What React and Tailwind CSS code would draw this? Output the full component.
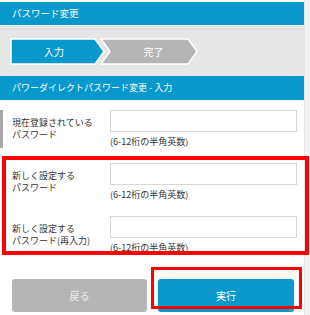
import React from 'react';

const font = { fontFamily: '"Noto Sans CJK JP", "Noto Sans", sans-serif' };

function Step({ label, active, first }) {
  // chevron drawn as svg, text on top
  const points = first
    ? '1,1 85,1 94,13.5 85,26 1,26'
    : '1,1 88,1 97,13.5 88,26 1,26 10,13.5';
  return (
    <div className={`relative h-[27px] ${first ? 'w-[96px]' : 'w-[99px] -ml-[6px]'}`}>
      <svg className="absolute inset-0" width={first ? 96 : 99} height="27" viewBox={`0 0 ${first ? 96 : 99} 27`}>
        <polygon points={points} fill={active ? '#0898cb' : '#b5b5b5'} stroke="#ffffff" strokeWidth="1.5" />
      </svg>
      <div className={`relative flex h-full items-center justify-center text-[10px] text-white ${first ? 'pr-[8px]' : 'pl-[8px] text-[#ececec]'}`}>
        {label}
      </div>
    </div>
  );
}

function Row({ label, bar }) {
  return (
    <div className={`flex h-[38px] ${bar ? 'border-l-[3px] border-[#a8a8a8] pl-[9px]' : 'pl-[12px]'}`}>
      <div className="w-[98px] pt-[7px] text-[9px] leading-[12px] text-[#333]">
        {label.map((l) => (
          <div key={l}>{l}</div>
        ))}
      </div>
      <div className="w-[187px]">
        <div className="h-[22px] border border-[#d6d6d6] bg-white"></div>
        <div className="mt-[4px] text-[9px] leading-[12px] text-[#333]">(6-12桁の半角英数)</div>
      </div>
    </div>
  );
}

export default function App() {
  return (
    <div className="relative h-[315px] w-[310px] overflow-hidden bg-[#f3f3f3]" style={font}>
      <div className="h-full w-[305px] border-r border-[#e2e2e2] bg-white pt-[2px]">
        {/* Page title */}
        <div className="flex h-[23px] items-center bg-[#0898cb] pl-[12px] text-[9.5px] text-white">
          パスワード変更
        </div>

        {/* Steps */}
        <div className="flex h-[51px] items-center border-t border-[#f4eeee] bg-[#e6e6e6] pl-[10px]">
          <Step label="入力" active first />
          <Step label="完了" />
        </div>

        {/* Section title */}
        <div className="flex h-[24px] items-center bg-[#0898cb] pl-[12px] text-[9px] text-white">
          パワーダイレクトパスワード変更 - 入力
        </div>

        {/* Form */}
        <div className="flex flex-col gap-[15px] pt-[10px]">
          <Row label={['現在登録されている', 'パスワード']} bar />
          <Row label={['新しく設定する', 'パスワード']} />
          <Row label={['新しく設定する', 'パスワード(再入力)']} />
        </div>

        {/* Buttons */}
        <div className="mt-[25px] flex gap-[11px] pl-[12px]">
          <button className="h-[33px] w-[135px] rounded-[3px] bg-[#b5b5b5] text-[10px] text-[#ececec]">戻る</button>
          <button className="h-[33px] w-[136px] rounded-[3px] bg-[#0898cb] text-[10px] text-white">実行</button>
        </div>
      </div>

      {/* annotation boxes */}
      <div className="absolute left-[2px] top-[156px] h-[99px] w-[307px] border-[4px] border-[#ff0000]"></div>
      <div className="absolute left-[151px] top-[267px] h-[42px] w-[151px] border-[3px] border-[#ff0000]"></div>
    </div>
  );
}
